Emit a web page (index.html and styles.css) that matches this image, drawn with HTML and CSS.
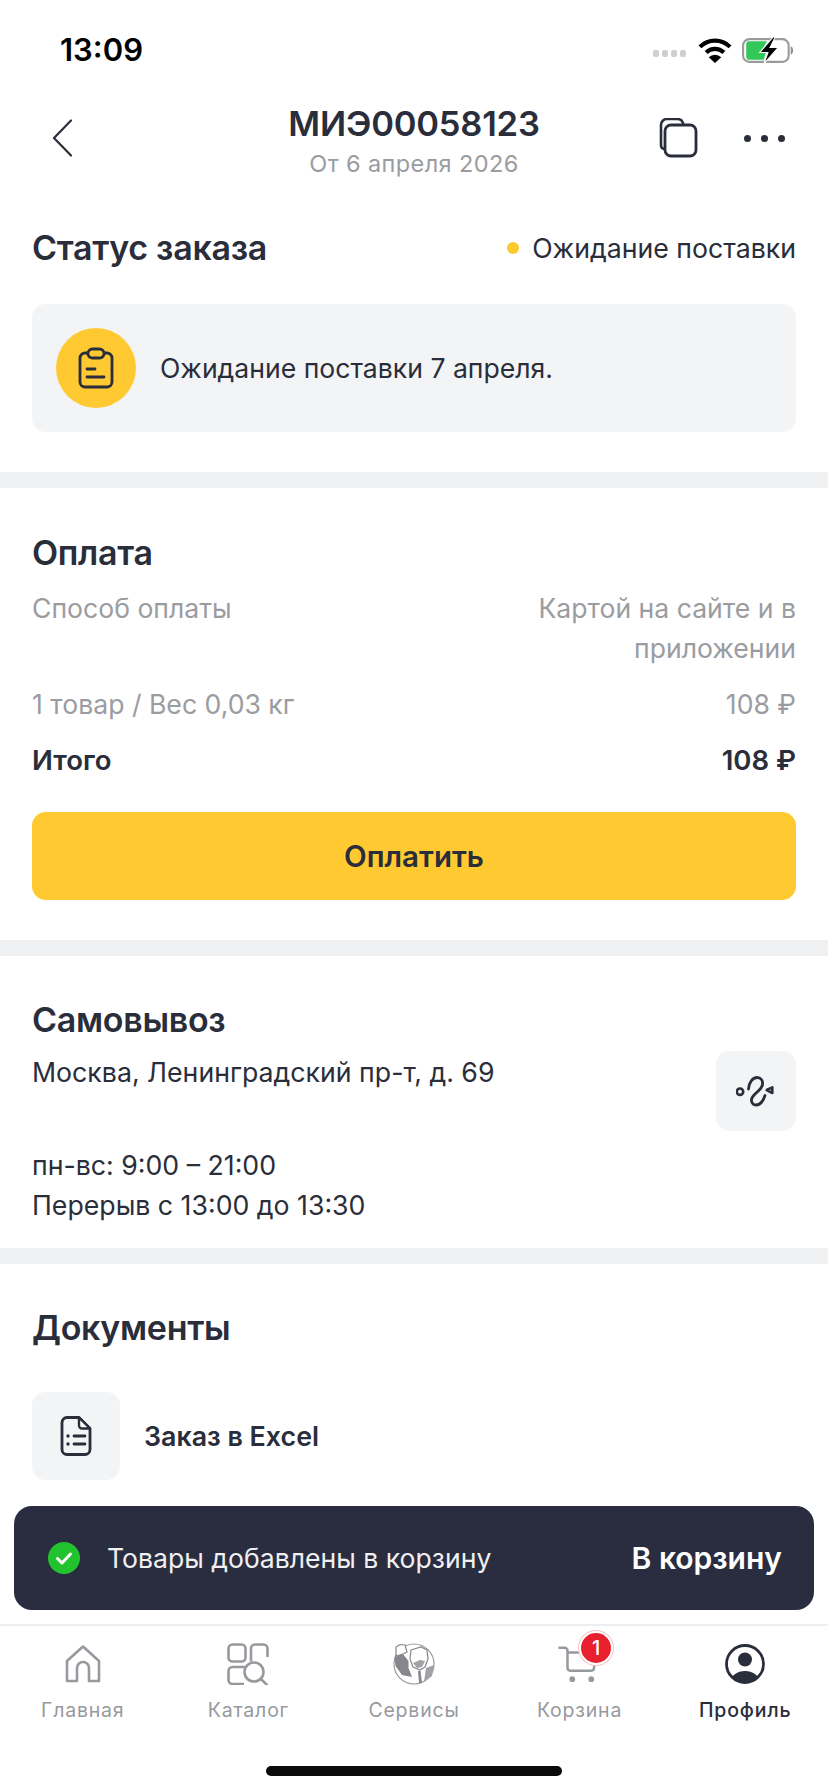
FILE: index.html
```html
<!DOCTYPE html>
<html lang="ru">
<head>
<meta charset="utf-8">
<title>МИЭ00058123</title>
<link rel="stylesheet" href="styles.css">
</head>
<body>
<div class="app">
  <div class="statusbar">
    <span class="time">13:09</span>
    <div class="status-icons">
      <div class="signal"><i></i><i></i><i></i><i></i></div>
      <svg class="wifi" width="36" height="27" viewBox="0 0 34 26"><path d="M2.500 9.500a20.500 20.500 0 0 1 29 0" fill="none" stroke="#000" stroke-width="4"/><path d="M8.500 15a12 12 0 0 1 17 0" fill="none" stroke="#000" stroke-width="4"/><path d="M17 25l-6-5.500a8.500 8.500 0 0 1 12 0z" fill="#000"/></svg>
      <svg class="battery" width="54" height="29" viewBox="0 0 52 28"><rect x="1" y="3" width="44" height="22" rx="6" fill="none" stroke="#9a9a9a" stroke-width="2"/><path d="M47 10c3 1 3 7 0 8z" fill="#8e8e8e"/><path d="M7 5h17l-6 11h5l-2 7H7a3 3 0 0 1-3-3V8a3 3 0 0 1 3-3z" fill="#34c759"/><path d="M30 1L17 16h8l-4 11 14-16h-8l5-10z" fill="#000" stroke="#fff" stroke-width="1"/></svg>
    </div>
  </div>

  <header class="topbar">
    <div class="top-left">
      <svg class="back" width="22" height="38" viewBox="0 0 22 38"><path d="M19 1.500L2 19l17 17.500" fill="none" stroke="#2a2d3a" stroke-width="2.200" stroke-linecap="round" stroke-linejoin="round"/></svg>
    </div>
    <div class="title-block">
      <div class="title">МИЭ00058123</div>
      <div class="subtitle">От 6 апреля 2026</div>
    </div>
    <div class="top-right">
      <svg class="copy" width="40" height="40" viewBox="0 0 40 40"><path d="M6 31a4 4 0 0 1-3-4V7a6 6 0 0 1 6-6h10a6 6 0 0 1 6 4" fill="none" stroke="#2a2d3a" stroke-width="2.600" stroke-linecap="round"/><rect x="7" y="7" width="31" height="31" rx="6" fill="#fff" stroke="#2a2d3a" stroke-width="2.800"/></svg>
      <div class="dots"><i></i><i></i><i></i></div>
    </div>
  </header>

  <main class="content">
    <section class="section status-section">
      <div class="status-head">
        <h2>Статус заказа</h2>
        <div class="status-label"><i class="dot"></i>Ожидание поставки</div>
      </div>
      <div class="info-card">
        <div class="info-circle">
          <svg width="36" height="42" viewBox="0 0 36 42"><path d="M10 6H7a5 5 0 0 0-5 5v24a5 5 0 0 0 5 5h22a5 5 0 0 0 5-5V11a5 5 0 0 0-5-5h-3" fill="none" stroke="#2a2d3a" stroke-width="2.800"/><rect x="10" y="2" width="16" height="9" rx="4.500" fill="none" stroke="#2a2d3a" stroke-width="2.800"/><path d="M9 22h8M9 30h17" stroke="#2a2d3a" stroke-width="2.800" stroke-linecap="round"/></svg>
        </div>
        <span>Ожидание поставки 7 апреля.</span>
      </div>
    </section>

    <section class="section pay-section">
      <h2>Оплата</h2>
      <div class="row muted method"><span>Способ оплаты</span><span class="right">Картой на сайте и в приложении</span></div>
      <div class="row muted goods"><span>1 товар / Вес 0,03 кг</span><span>108 ₽</span></div>
      <div class="row total"><span>Итого</span><span>108 ₽</span></div>
      <button class="pay-btn">Оплатить</button>
    </section>

    <section class="section pickup-section">
      <div class="pickup-top">
        <div>
          <h2>Самовывоз</h2>
          <p class="addr">Москва, Ленинградский пр-т, д. 69</p>
        </div>
        <div class="route-btn">
          <svg width="40" height="32" viewBox="0 0 40 32"><circle cx="4" cy="16.700" r="3.200" fill="none" stroke="#2a2d3a" stroke-width="2.600"/><path d="M12.500 14C13 7 17 2.500 21 2.500s6 3 5.500 7c-.5 4-4.500 6.500-7.500 9.500-2.500 2.500-4 4.500-3.500 7 .5 2.500 2.500 4 4.500 4 3.500 0 7-3.500 9-9.500" fill="none" stroke="#2a2d3a" stroke-width="2.800" stroke-linecap="round"/><path d="M30.700 15l5.600-2.700v5.700z" fill="none" stroke="#2a2d3a" stroke-width="2.600" stroke-linejoin="round"/></svg>
        </div>
      </div>
      <p class="hours">пн-вс: 9:00 – 21:00<br>Перерыв с 13:00 до 13:30</p>
    </section>

    <section class="section docs-section">
      <h2>Документы</h2>
      <div class="doc-row">
        <div class="doc-icon">
          <svg width="32" height="40" viewBox="0 0 32 40"><path d="M19 1.500H7a5 5 0 0 0-5 5v27a5 5 0 0 0 5 5h18a5 5 0 0 0 5-5V12.500z" fill="none" stroke="#2a2d3a" stroke-width="2.800" stroke-linejoin="round"/><path d="M19 1.500v8a3 3 0 0 0 3 3h8z" fill="#fff" stroke="#2a2d3a" stroke-width="2.400" stroke-linejoin="round"/><path d="M14 20h11M14 28h11" stroke="#2a2d3a" stroke-width="2.800" stroke-linecap="round"/><circle cx="8" cy="20" r="1.700" fill="#2a2d3a"/><circle cx="8" cy="28" r="1.700" fill="#2a2d3a"/></svg>
        </div>
        <span>Заказ в Excel</span>
      </div>
    </section>

    <div class="toast">
      <svg class="check" width="32" height="32" viewBox="0 0 32 32"><circle cx="16" cy="16" r="16" fill="#22c32e"/><path d="M9.500 16.500l4.500 4.500 8.500-9" fill="none" stroke="#fff" stroke-width="3" stroke-linecap="round" stroke-linejoin="round"/></svg>
      <span class="toast-text">Товары добавлены в корзину</span>
      <span class="toast-action">В корзину</span>
    </div>
  </main>

  <nav class="tabbar">
    <div class="tab">
      <svg width="36" height="42" viewBox="0 0 36 38"><path d="M2 36V16L18 1.500 34 16v20H24V23a6 6 0 0 0-12 0v13z" fill="none" stroke="#97999e" stroke-width="2.600" stroke-linejoin="round"/></svg>
      <span>Главная</span>
    </div>
    <div class="tab">
      <svg width="42" height="42" viewBox="0 0 42 42"><rect x="1.500" y="1.500" width="17" height="17" rx="4" fill="none" stroke="#97999e" stroke-width="2.600"/><path d="M28 1.500h8.500a4 4 0 0 1 4 4V14M24 18.500V5.500a4 4 0 0 1 4-4" fill="none" stroke="#97999e" stroke-width="2.600"/><path d="M18.500 24H5.500a4 4 0 0 0-4 4v9a4 4 0 0 0 4 4H17" fill="none" stroke="#97999e" stroke-width="2.600"/><circle cx="27" cy="29" r="9.500" fill="none" stroke="#97999e" stroke-width="2.600"/><path d="M34 36l6 6" stroke="#97999e" stroke-width="2.600" stroke-linecap="round"/></svg>
      <span>Каталог</span>
    </div>
    <div class="tab">
      <svg width="42" height="42" viewBox="0 0 42 42"><circle cx="21" cy="21" r="20" fill="#fff" stroke="#97999e" stroke-width="1.200"/><path d="M1.500 14l8.500-3 5.500 7v7l3.500 9-10-2-6.500-9z" fill="#85878c"/><path d="M3 4l4-2.500 5 .5 2 7-4 2-7 2z" fill="#fff" stroke="#85878c" stroke-width="1.200"/><path d="M18 7l10-3 6 3 1 9-3 8-5 3-7-3-3-8z" fill="#fff" stroke="#85878c" stroke-width="1.200"/><path d="M20 20l7-3 5 1-3 6-5 1z" fill="#a0a2a6"/><path d="M33 25l8-3-2 11-8 6z" fill="#a0a2a6"/><path d="M25 28h2.500l1.500 12h-3z" fill="#85878c"/></svg>
      <span>Сервисы</span>
    </div>
    <div class="tab">
      <div class="cart-wrap">
        <svg width="38" height="42" viewBox="0 0 40 42"><path d="M1.500 4H7a3 3 0 0 1 3 3v18a3 3 0 0 0 3 3h22a3 3 0 0 0 3-3v-5M10 9h20" fill="none" stroke="#97999e" stroke-width="2.600" stroke-linecap="round"/><circle cx="15" cy="37" r="3" fill="#97999e"/><circle cx="35" cy="37" r="3" fill="#97999e"/></svg>
        <b class="badge">1</b>
      </div>
      <span>Корзина</span>
    </div>
    <div class="tab active">
      <svg width="40" height="42" viewBox="0 0 40 40"><defs><clipPath id="pc"><circle cx="20" cy="20" r="18.500"/></clipPath></defs><circle cx="20" cy="20" r="18.500" fill="none" stroke="#2a2d3a" stroke-width="2.800"/><circle cx="20" cy="15.500" r="7" fill="#2a2d3a"/><ellipse cx="20" cy="37" rx="14" ry="10" fill="#2a2d3a" clip-path="url(#pc)"/></svg>
      <span>Профиль</span>
    </div>
  </nav>
  <div class="homebar"><i></i></div>
</div>
</body>
</html>
```
FILE: styles.css
```css
* { box-sizing: border-box; }
html, body { margin: 0; padding: 0; background: #fff; }
body { font-family: Inter, "Noto Sans", sans-serif; color: #2a2d3a; }
.app { width: 828px; height: 1792px; display: flex; flex-direction: column; overflow: hidden; }

.statusbar { height: 80px; flex: none; display: flex; align-items: flex-end; justify-content: space-between; padding: 0 32px 12px 60px; }
.time { font-weight: 600; font-size: 31px; line-height: 36px; color: #000; }
.status-icons { display: flex; align-items: center; gap: 9px; padding-bottom: 3px; }
.signal { display: flex; gap: 2.500px; padding-top: 6px; margin-right: 2px; }
.signal i { width: 6.500px; height: 7px; border-radius: 2px; background: #cfcfcf; }

.topbar { height: 110px; flex: none; display: grid; grid-template-columns: 1fr auto 1fr; padding: 0 43px; }
.back { margin: 39px 0 0 9px; display: block; }
.title-block { text-align: center; padding-top: 24px; }
.title { font-size: 34.500px; line-height: 40px; font-weight: 600; letter-spacing: -0.2px; }
.subtitle { font-size: 23.500px; line-height: 30px; margin-top: 5px; color: #9a9ca1; letter-spacing: 0.4px; }
.top-right { display: flex; justify-content: flex-end; align-items: flex-start; }
.copy { margin-top: 38px; flex: none; }
.dots { display: flex; gap: 10px; margin: 55px 0 0 46px; flex: none; }
.dots i { width: 7px; height: 7px; border-radius: 50%; background: #2a2d3a; }

.content { flex: 1; position: relative; overflow: hidden; }
.section { padding: 0 32px; border-bottom: 16px solid #f0f1f3; }
h2 { margin: 0; font-size: 34px; line-height: 42px; font-weight: 600; letter-spacing: -0.3px; }

.status-section { height: 298px; padding-top: 37px; }
.status-head { display: flex; justify-content: space-between; align-items: center; }
.status-label { display: flex; align-items: center; font-size: 26.700px; }
.dot { width: 12px; height: 12px; border-radius: 50%; background: #ffc931; margin-right: 13px; }
.info-card { margin-top: 35px; height: 128px; background: #f3f4f6; border-radius: 14px; display: flex; align-items: center; gap: 24px; padding-left: 24px; font-size: 26.600px; }
.info-circle { width: 80px; height: 80px; border-radius: 50%; background: #ffc931; display: flex; align-items: center; justify-content: center; }

.pay-section { height: 468px; padding-top: 44px; }
.row { display: flex; justify-content: space-between; font-size: 26.600px; line-height: 40px; }
.muted { color: #9a9ca1; }
.method { margin-top: 14px; }
.method .right { width: 300px; text-align: right; }
.goods { margin-top: 16px; }
.total { margin-top: 16px; font-weight: 600; font-size: 27.500px; color: #2a2d3a; }
.pay-btn { display: block; width: 100%; height: 88px; margin-top: 32px; border: 0; border-radius: 14px; background: #ffc931; color: #2a2d3a; font: 600 29.500px Inter, sans-serif; }

.pickup-section { height: 308px; padding-top: 43px; }
.pickup-top { display: flex; justify-content: space-between; align-items: flex-start; height: 146px; }
.addr, .hours { margin: 0; font-size: 26.700px; line-height: 40px; }
.addr { margin-top: 11px; }
.route-btn { width: 80px; height: 80px; margin-top: 52px; background: #f3f4f6; border-radius: 14px; display: flex; align-items: center; justify-content: center; flex: none; }

.docs-section { padding-top: 43px; border-bottom: 0; }
.doc-row { display: flex; align-items: center; gap: 24px; margin-top: 43px; font-size: 26.800px; font-weight: 600; }
.doc-icon { width: 88px; height: 88px; background: #f3f4f6; border-radius: 14px; display: flex; align-items: center; justify-content: center; }

.toast { position: absolute; left: 14px; right: 14px; top: 1316px; height: 104px; border-radius: 18px; background: #2a2d3f; display: flex; align-items: center; padding: 0 32px 0 34px; color: #f0f0f2; }
.check { flex: none; }
.toast-text { flex: 1; margin-left: 27px; font-size: 26.600px; }
.toast-action { font-size: 30px; font-weight: 600; color: #fff; }

.tabbar { height: 126px; flex: none; border-top: 2px solid #eeeef0; display: flex; padding-top: 17px; }
.tab { flex: 1; display: flex; flex-direction: column; align-items: center; font-size: 19.500px; line-height: 26px; letter-spacing: 0.8px; color: #97999e; }
.tab svg { display: block; }
.tab > span { margin-top: 12px; }
.tab.active { color: #2a2d3a; font-weight: 500; }
.cart-wrap { position: relative; width: 38px; height: 42px; margin-right: 5px; }
.badge { position: absolute; left: 21px; top: -12px; width: 34px; height: 34px; border-radius: 50%; background: #e8202e; border: 2px solid #fff; box-shadow: 0 0 0 1px #f6c5c9; color: #fff; font-size: 20px; font-weight: 500; line-height: 30px; text-align: center; letter-spacing: 0; }

.homebar { height: 42px; flex: none; display: flex; justify-content: center; padding-top: 16px; }
.homebar i { width: 296px; height: 10px; border-radius: 5px; background: #0b0b0c; }
```
